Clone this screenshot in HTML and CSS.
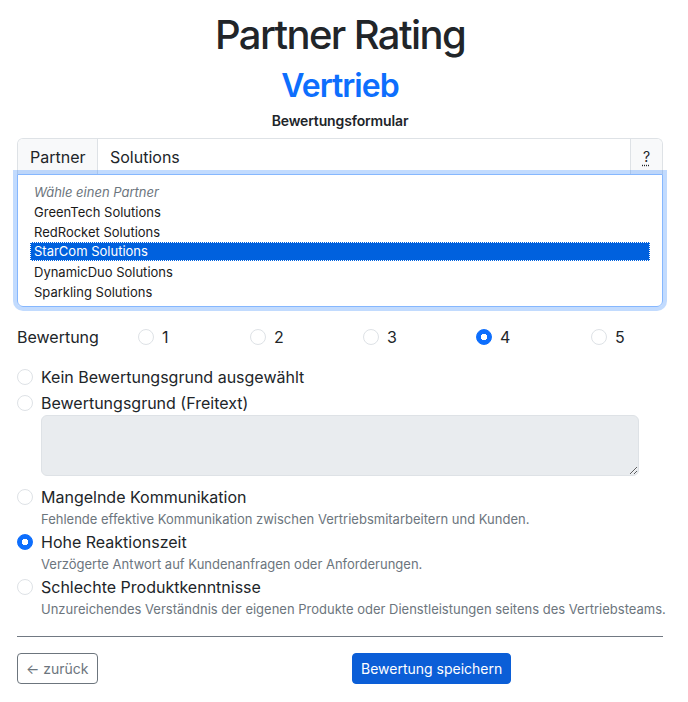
FILE: index.html
```html
<!DOCTYPE html>
<html lang="de">
<head>
<meta charset="utf-8">
<title>Partner Rating</title>
<link rel="stylesheet" href="styles.css">
</head>
<body>
<main class="page">
  <h1 class="title">Partner Rating</h1>
  <h2 class="subtitle">Vertrieb</h2>
  <p class="caption">Bewertungsformular</p>

  <div class="input-group">
    <span class="ig-label">Partner</span>
    <span class="ig-input">Solutions</span>
    <span class="ig-help"><abbr title="Hilfe">?</abbr></span>
  </div>
  <div class="listbox" role="listbox">
    <div class="opt placeholder">Wähle einen Partner</div>
    <div class="opt">GreenTech Solutions</div>
    <div class="opt">RedRocket Solutions</div>
    <div class="opt selected">StarCom Solutions</div>
    <div class="opt">DynamicDuo Solutions</div>
    <div class="opt">Sparkling Solutions</div>
    <div class="opt">Infinity Solutions</div>
  </div>

  <div class="rating">
    <span class="rating-label">Bewertung</span>
    <label class="rcheck"><span class="radio"></span>1</label>
    <label class="rcheck"><span class="radio"></span>2</label>
    <label class="rcheck"><span class="radio"></span>3</label>
    <label class="rcheck"><span class="radio checked"></span>4</label>
    <label class="rcheck"><span class="radio"></span>5</label>
  </div>

  <div class="reasons">
    <div class="check"><span class="radio"></span><span class="clabel">Kein Bewertungsgrund ausgewählt</span></div>
    <div class="check"><span class="radio"></span><span class="clabel">Bewertungsgrund (Freitext)</span></div>
    <textarea class="freetext" disabled></textarea>
    <div class="check with-desc first"><span class="radio"></span><span class="clabel">Mangelnde Kommunikation</span></div>
    <div class="desc">Fehlende effektive Kommunikation zwischen Vertriebsmitarbeitern und Kunden.</div>
    <div class="check with-desc"><span class="radio checked"></span><span class="clabel">Hohe Reaktionszeit</span></div>
    <div class="desc">Verzögerte Antwort auf Kundenanfragen oder Anforderungen.</div>
    <div class="check with-desc"><span class="radio"></span><span class="clabel">Schlechte Produktkenntnisse</span></div>
    <div class="desc">Unzureichendes Verständnis der eigenen Produkte oder Dienstleistungen seitens des Vertriebsteams.</div>
  </div>

  <hr class="sep">

  <div class="actions">
    <div><button class="btn btn-back" type="button">← zurück</button></div>
    <div><button class="btn btn-save" type="button">Bewertung speichern</button></div>
  </div>
</main>
</body>
</html>
```
FILE: styles.css
```css
* { box-sizing: border-box; }
html, body { margin: 0; padding: 0; background: #fff; }
body {
  font-family: Inter, "Noto Sans", "Liberation Sans", sans-serif;
  color: #212529;
  font-size: 16px;
  line-height: 1.5;
}
.page {
  width: 646px;
  margin-left: 17px;
  padding-top: 11px;
}
.title {
  margin: 0 0 8px;
  font-size: 40px;
  line-height: 48px;
  font-weight: 500;
  letter-spacing: -0.04em;
  text-align: center;
}
.subtitle {
  margin: 0;
  font-size: 32px;
  line-height: 38px;
  font-weight: 600;
  letter-spacing: -0.03em;
  color: #0d6efd;
  text-align: center;
}
.caption {
  margin: 5px 0 0;
  font-size: 14px;
  line-height: 21px;
  font-weight: 600;
  letter-spacing: -0.01em;
  text-align: center;
}
.input-group {
  margin-top: 7px;
  display: flex;
  height: 37px;
  border: 1px solid #dee2e6;
  border-bottom: 0;
  border-radius: 6px 6px 0 0;
  overflow: hidden;
}
.ig-label {
  width: 80px;
  padding: 6px 12px;
  background: #f8f9fa;
  border-right: 1px solid #dee2e6;
}
.ig-input {
  flex: 1;
  padding: 6px 12px;
}
.ig-help {
  width: 32px;
  background: #f8f9fa;
  border-left: 1px solid #dee2e6;
  padding: 7px 0 0;
  text-align: center;
  font-size: 14px;
}
.ig-help abbr {
  text-decoration: underline dotted;
  text-underline-offset: 3px;
  cursor: help;
}
.listbox {
  position: relative;
  height: 133px;
  margin-top: -1px;
  border: 1px solid #86b7fe;
  border-radius: 0 0 6px 6px;
  box-shadow: 0 0 0 4px rgba(13, 110, 253, 0.25);
  padding: 7px 12px 0;
  overflow: hidden;
  font-size: 13px;
  line-height: 20px;
}
.opt {
  padding: 0 4px;
  height: 20px;
  color: #1a1a1a;
}
.opt.placeholder { font-style: italic; color: #6c757d; }
.opt.selected {
  background: #0061de;
  color: #fff;
  outline: 1px dotted #ffffff;
  outline-offset: -1px;
  height: 19px;
  line-height: 19px;
  margin-bottom: 1px;
}
.rating {
  display: grid;
  grid-template-columns: 121px 112px 113px 113px 115px 1fr;
  align-items: center;
  margin-top: 18px;
  height: 24px;
}
.rcheck {
  display: flex;
  align-items: center;
  gap: 8px;
}
.radio {
  width: 16px;
  height: 16px;
  flex: none;
  border-radius: 50%;
  border: 1px solid #dee2e6;
  background: #fff;
  display: inline-block;
}
.radio.checked {
  border-color: #0d6efd;
  background: radial-gradient(circle, #fff 0 3px, #0d6efd 3.5px);
}
.reasons { margin-top: 16px; }
.check {
  display: flex;
  align-items: center;
  gap: 8px;
  height: 24px;
  margin-bottom: 2px;
}
.check.with-desc { margin-bottom: 0; }
.check.first { margin-top: 9px; }
.desc {
  padding-left: 24px;
  font-size: 13px;
  line-height: 21px;
  color: #6c757d;
  white-space: nowrap;
}
.freetext {
  display: block;
  margin: -2px 0 0 24px;
  width: 598px;
  height: 61px;
  background: #e9ecef;
  border: 1px solid #dee2e6;
  border-radius: 6px;
  font: inherit;
  resize: vertical;
}
.sep {
  margin: 16px 0 16px;
  border: 0;
  border-top: 1px solid #717983;
}
.actions {
  display: grid;
  grid-template-columns: 1fr 1fr;
  column-gap: 24px;
}
.btn {
  font-family: inherit;
  font-size: 14px;
  line-height: 21px;
  padding: 4px 8px;
  border-radius: 4px;
  cursor: pointer;
}
.btn-back {
  background: #fff;
  color: #6c757d;
  border: 1px solid #6c757d;
}
.btn-save {
  background: #0b5ed7;
  color: #fff;
  border: 1px solid #0b5ed7;
}
```
